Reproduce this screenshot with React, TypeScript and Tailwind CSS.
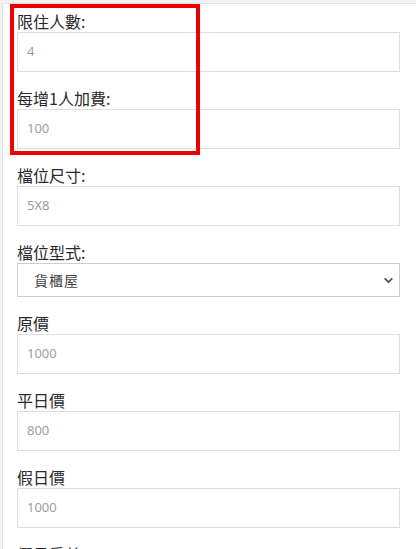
import { ChevronDown } from "lucide-react";

const fields = [
  { label: "限住人數:", value: "4" },
  { label: "每增1人加費:", value: "100" },
  { label: "檔位尺寸:", value: "5X8" },
  { label: "檔位型式:", select: "貨櫃屋" },
  { label: "原價", value: "1000" },
  { label: "平日價", value: "800" },
  { label: "假日價", value: "1000" },
  { label: "假日房差", value: "" },
];

const font = { fontFamily: '"Noto Sans CJK TC", "Noto Sans", sans-serif' };

export default function App() {
  return (
    <div className="relative h-[549px] overflow-hidden bg-[#f2f2f2] pl-[2px] pt-[3px]" style={font}>
      <div className="h-full border-l border-t border-[#e2e2e2] bg-white pl-[14px] pr-[16px] pt-[6px]">
        {fields.map((f, i) => (
          <div key={i} className={i === 0 ? "" : "mt-[15px]"}>
            <label className="block h-[22px] text-[16px] leading-[22px] text-[#2a2a2a]">{f.label}</label>
            {f.select ? (
              <div className="flex h-[34px] items-center justify-between border border-[#cdcdcd] bg-white pl-[16px] pr-[4px]">
                <span className="text-[14px] tracking-[1px] text-[#444]">{f.select}</span>
                <ChevronDown size={13} strokeWidth={3.5} className="text-[#555]" />
              </div>
            ) : (
              <div className="flex h-[40px] items-center border border-[#dedede] bg-white pl-[9px]">
                <span className="text-[13px] text-[#999]" style={{ fontFamily: '"Open Sans", sans-serif' }}>
                  {f.value}
                </span>
              </div>
            )}
          </div>
        ))}
      </div>
      <div className="absolute left-[10px] top-[4px] h-[151px] w-[190px] border-4 border-[#ee0000]" />
    </div>
  );
}
